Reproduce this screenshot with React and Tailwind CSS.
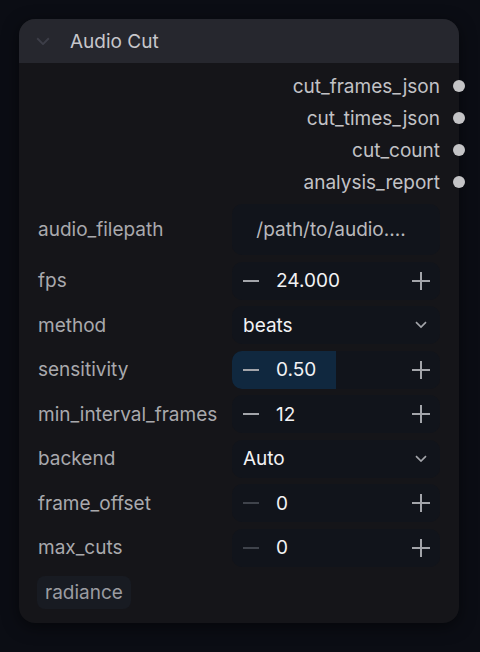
import React from "react";

const Minus = ({ dim }) => (
  <svg width="18" height="18" viewBox="0 0 18 18" className="shrink-0">
    <line x1="1" y1="9" x2="17" y2="9" stroke={dim ? "#3f434b" : "#a3a5aa"} strokeWidth="2" />
  </svg>
);

const Plus = () => (
  <svg width="20" height="20" viewBox="0 0 20 20" className="shrink-0">
    <line x1="1" y1="10" x2="19" y2="10" stroke="#a3a5aa" strokeWidth="2" />
    <line x1="10" y1="1" x2="10" y2="19" stroke="#a3a5aa" strokeWidth="2" />
  </svg>
);

const Chevron = ({ color = "#a3a5aa", size = 12 }) => (
  <svg width={size} height={size * 0.6} viewBox="0 0 12 7" className="shrink-0">
    <path d="M1 1 L6 6 L11 1" fill="none" stroke={color} strokeWidth="1.6" />
  </svg>
);

const Label = ({ children }) => (
  <div className="text-[19px] text-[#a9a9ad] leading-none">{children}</div>
);

const NumberW = ({ value, dim, fill }) => (
  <div className="relative w-[208px] h-[38px] rounded-[10px] bg-[#11141b] flex items-center overflow-hidden">
    {fill != null && (
      <div
        className="absolute left-0 top-0 bottom-0 bg-[#10283f]"
        style={{ width: `${fill}%` }}
      />
    )}
    <div className="relative flex items-center w-full pl-[10px] pr-[9px]">
      <Minus dim={dim} />
      <span className="ml-[16px] text-[19px] text-[#f2f2f4] leading-none">{value}</span>
      <div className="ml-auto">
        <Plus />
      </div>
    </div>
  </div>
);

const SelectW = ({ value }) => (
  <div className="w-[208px] h-[38px] rounded-[10px] bg-[#11141b] flex items-center pl-[11px] pr-[13px]">
    <span className="text-[19px] text-[#f2f2f4] leading-none">{value}</span>
    <div className="ml-auto">
      <Chevron />
    </div>
  </div>
);

const Row = ({ label, children }) => (
  <div className="flex items-center justify-between pl-[19px] pr-[19px]">
    <Label>{label}</Label>
    {children}
  </div>
);

export default function App() {
  const outputs = ["cut_frames_json", "cut_times_json", "cut_count", "analysis_report"];
  return (
    <div
      className="w-[480px] h-[652px] bg-[#0b0d14] pt-[19px] pl-[19px]"
      style={{ fontFamily: "Inter, 'Noto Sans', sans-serif" }}
    >
      <div className="w-[440px] h-[604px] rounded-[16px] bg-[#151519] shadow-[0_4px_16px_rgba(0,0,0,0.5)] flex flex-col">
        <div className="h-[44px] rounded-t-[16px] bg-[#26272e] flex items-center pl-[17px]">
          <Chevron color="#3d3e48" size={14} />
          <span className="ml-[20px] text-[19px] text-[#c6c6cb] leading-none">Audio Cut</span>
        </div>
        <div className="pt-[7px] flex flex-col">
          {outputs.map((o) => (
            <div key={o} className="relative h-[32px] flex items-center justify-end pr-[19px]">
              <span className="text-[19px] text-[#c2c2c6] leading-none">{o}</span>
              <div className="absolute right-[-6px] top-1/2 -translate-y-1/2 w-[12px] h-[12px] rounded-full bg-[#c4c4c6]" />
            </div>
          ))}
        </div>
        <div className="mt-[6px] flex flex-col gap-[6.5px]">
          <Row label="audio_filepath">
            <div className="w-[208px] h-[51px] rounded-[10px] bg-[#11141b] flex items-center justify-center pr-[10px]">
              <span className="text-[19px] text-[#b9b9bd] leading-none">/path/to/audio....</span>
            </div>
          </Row>
          <Row label="fps">
            <NumberW value="24.000" />
          </Row>
          <Row label="method">
            <SelectW value="beats" />
          </Row>
          <Row label="sensitivity">
            <NumberW value="0.50" fill={50} />
          </Row>
          <Row label="min_interval_frames">
            <NumberW value="12" />
          </Row>
          <Row label="backend">
            <SelectW value="Auto" />
          </Row>
          <Row label="frame_offset">
            <NumberW value="0" dim />
          </Row>
          <Row label="max_cuts">
            <NumberW value="0" dim />
          </Row>
        </div>
        <div className="pl-[18px] mt-[9px]">
          <div className="inline-flex items-center h-[33px] px-[8px] rounded-[8px] bg-[#181b22]">
            <span className="text-[19px] text-[#9b9ca1] leading-none">radiance</span>
          </div>
        </div>
      </div>
    </div>
  );
}
